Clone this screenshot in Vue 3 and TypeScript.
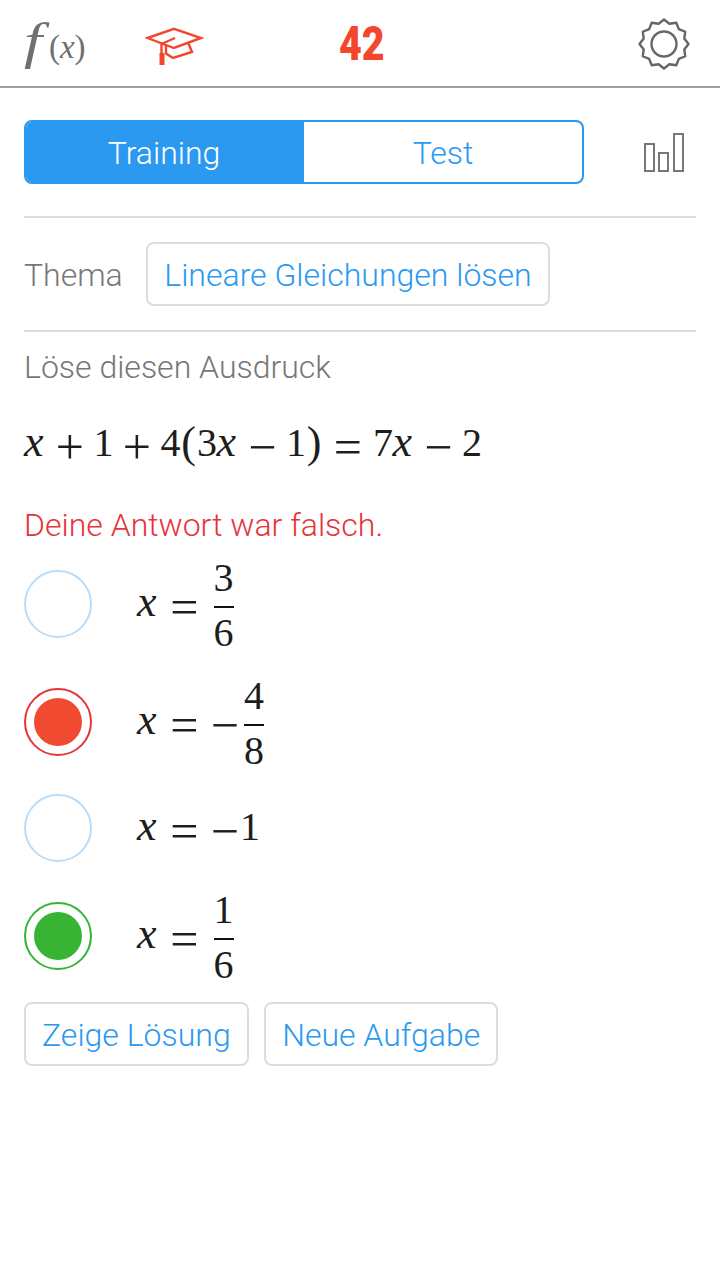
<script setup lang="ts">
import { computed } from 'vue';

const gearPoints = computed(() => {
  const pts: string[] = [];
  for (let i = 0; i < 24; i++) {
    const r = i % 2 === 0 ? 24.500 : 21;
    const a = (i * Math.PI) / 12 - Math.PI / 2;
    pts.push(`${(26 + r * Math.cos(a)).toFixed(2)},${(26 + r * Math.sin(a)).toFixed(2)}`);
  }
  return pts.join(' ');
});
</script>

<template>
  <div class="page">
    <header class="topbar">
      <div class="fx"><i class="f">f</i><span class="fx-rest">(<i>x</i>)</span></div>
      <svg class="cap" width="60" height="40" viewBox="145 27 60 40" fill="none" stroke="#f4462f" stroke-width="2.400">
        <path d="M147.500 38 L174 28.800 L201 38 L174 48 Z" />
        <path d="M175 38 L161.500 44 V54" />
        <path d="M166 45 V53.500 L173 58 L192 52 L188.500 43.500" />
        <rect x="159.500" y="53" width="5" height="12" fill="#f4462f" stroke="none" />
      </svg>
      <div class="score">42</div>
      <svg class="gear" width="52" height="52" viewBox="0 0 52 52" fill="none" stroke="#666" stroke-width="2.400">
        <polygon :points="gearPoints" stroke-linejoin="round" />
        <circle cx="26" cy="26" r="12.500" />
      </svg>
    </header>

    <main class="content">
      <div class="mode-row">
        <div class="segment">
          <div class="seg active">Training</div>
          <div class="seg">Test</div>
        </div>
        <svg class="bars" width="44" height="42" viewBox="0 0 44 42" fill="none" stroke="#777" stroke-width="2">
          <rect x="2" y="13" width="9" height="27" />
          <rect x="16" y="22" width="9" height="18" />
          <rect x="31" y="3" width="9" height="37" />
        </svg>
      </div>

      <hr class="rule first" />

      <div class="topic-row">
        <span class="label">Thema</span>
        <button class="btn">Lineare Gleichungen lösen</button>
      </div>

      <hr class="rule" />

      <p class="label prompt">Löse diesen Ausdruck</p>

      <div class="math equation">
        <i class="x">x</i><span class="op">+</span><span class="d">1</span><span class="op">+</span><span class="d">4</span><span class="paren">(</span><span class="d">3</span><i class="x">x</i><span class="op">−</span><span class="d">1</span><span class="paren">)</span><span class="op rel">=</span><span class="d">7</span><i class="x">x</i><span class="op">−</span><span class="d">2</span>
      </div>

      <p class="error">Deine Antwort war falsch.</p>

      <div class="answers">
        <div class="row">
          <span class="radio"></span>
          <div class="math">
            <div class="term"><i class="x">x</i><span class="op rel">=</span></div>
            <span class="frac"><span class="num">3</span><span class="den">6</span></span>
          </div>
        </div>
        <div class="row">
          <span class="radio wrong"><span class="dot"></span></span>
          <div class="math">
            <div class="term"><i class="x">x</i><span class="op rel">=</span><span class="op unary">−</span></div>
            <span class="frac"><span class="num">4</span><span class="den">8</span></span>
          </div>
        </div>
        <div class="row flat">
          <span class="radio"></span>
          <div class="math">
            <div class="term"><i class="x">x</i><span class="op rel">=</span><span class="op unary">−</span><span class="d">1</span></div>
          </div>
        </div>
        <div class="row">
          <span class="radio right"><span class="dot"></span></span>
          <div class="math">
            <div class="term"><i class="x">x</i><span class="op rel">=</span></div>
            <span class="frac"><span class="num">1</span><span class="den">6</span></span>
          </div>
        </div>
      </div>

      <div class="actions">
        <button class="btn">Zeige Lösung</button>
        <button class="btn">Neue Aufgabe</button>
      </div>
    </main>
  </div>
</template>

<style>
html, body {
  background: #fff;
}
</style>

<style scoped>
.page {
  font-family: Roboto, "Liberation Sans", sans-serif;
  font-weight: 300;
  font-size: 32px;
  color: #777;
}

.topbar {
  display: flex;
  align-items: center;
  height: 86px;
  padding: 0 31px 0 24px;
  border-bottom: 2px solid #a0a0a0;
}

.fx {
  width: 61px;
  margin-top: -4px;
  font-family: "Liberation Serif", serif;
  color: #707070;
  white-space: nowrap;
}

.f {
  display: inline-block;
  margin-right: 11px;
  font-size: 50px;
  transform: scaleX(1.3);
  transform-origin: left center;
}

.fx-rest {
  font-size: 33px;
}

.cap {
  margin-left: 60px;
  margin-top: 8px;
}

.score {
  width: 45px;
  margin-left: 134px;
  font-weight: 900;
  font-size: 48px;
  color: #f4462f;
  transform: scaleX(0.82);
  transform-origin: left center;
}

.gear {
  margin-left: auto;
  margin-right: -1px;
  margin-top: 2px;
}

.content {
  padding: 32px 24px 0;
}

.mode-row {
  display: flex;
  align-items: center;
  justify-content: space-between;
}

.segment {
  display: flex;
  width: 560px;
  height: 64px;
  box-sizing: border-box;
  border: 2px solid #2b99f0;
  border-radius: 8px;
  overflow: hidden;
}

.seg {
  flex: 1 1 0;
  display: flex;
  align-items: center;
  justify-content: center;
  padding-top: 2px;
  color: #2b99f0;
}

.seg.active {
  text-indent: -2px;
  background: #2b99f0;
  color: #fff;
}

.bars {
  margin-right: 9px;
}

.rule {
  margin: 24px 0;
  border: 0;
  border-top: 2px solid #ddd;
}

.rule.first {
  margin-top: 32px;
}

.topic-row {
  display: flex;
  align-items: center;
  gap: 23.500px;
}

.btn {
  height: 64px;
  padding: 2px 16px 0;
  font: inherit;
  color: #2b99f0;
  background: #fff;
  border: 2px solid #ddd;
  border-radius: 8px;
}

.label {
  color: #777;
  padding-top: 2px;
}

.prompt {
  margin: -8px 0 0;
  padding-top: 0;
  line-height: 38px;
}

.math {
  display: flex;
  align-items: center;
  font-family: "Liberation Serif", serif;
  font-size: 40px;
  color: #1d1d1d;
}

.term {
  line-height: 46px;
  padding-bottom: 3px;
}

.equation {
  display: block;
  height: 46px;
  margin-top: 33px;
  line-height: 46px;
  white-space: nowrap;
}

.x {
  display: inline-block;
  width: 22px;
  font-size: 44px;
}

.d {
  display: inline-block;
  width: 19.500px;
  text-align: center;
}

.op {
  display: inline-block;
  width: 30.500px;
  margin: 0 8.500px;
  font-size: 50px;
  line-height: 30px;
  text-align: center;
  vertical-align: -8px;
}

.op.rel {
  margin: 0 10px;
}

.op.unary {
  margin: 0;
}

.paren {
  display: inline-block;
  width: 17px;
  font-size: 44px;
  line-height: 30px;
  text-align: center;
  vertical-align: -1px;
}

.error {
  margin: 41px 0 0;
  line-height: 38px;
  color: #e5343a;
}

.answers {
  display: flex;
  flex-direction: column;
  gap: 30px;
  margin-top: 16px;
}

.row {
  display: flex;
  align-items: center;
  gap: 45px;
  height: 88px;
}

.row.flat {
  height: 68px;
  margin-top: -2px;
}

.radio {
  display: flex;
  align-items: center;
  justify-content: center;
  width: 68px;
  height: 68px;
  box-sizing: border-box;
  border: 2px solid #b9dcf8;
  border-radius: 50%;
}

.dot {
  width: 48px;
  height: 48px;
  border-radius: 50%;
}

.radio.wrong {
  border-color: #e5343a;
}

.radio.wrong .dot {
  background: #f04a30;
}

.radio.right {
  border-color: #38b435;
}

.radio.right .dot {
  background: #38b435;
}

.frac {
  display: flex;
  flex-direction: column;
  align-items: center;
  width: 20px;
  margin: 3px 0 0 4px;
  line-height: 26px;
}

.num {
  margin-bottom: 15px;
}

.den {
  width: 100%;
  padding-top: 12px;
  text-align: center;
  border-top: 2px solid #111;
}

.actions {
  display: flex;
  gap: 15.500px;
  margin-top: 22px;
}
</style>
